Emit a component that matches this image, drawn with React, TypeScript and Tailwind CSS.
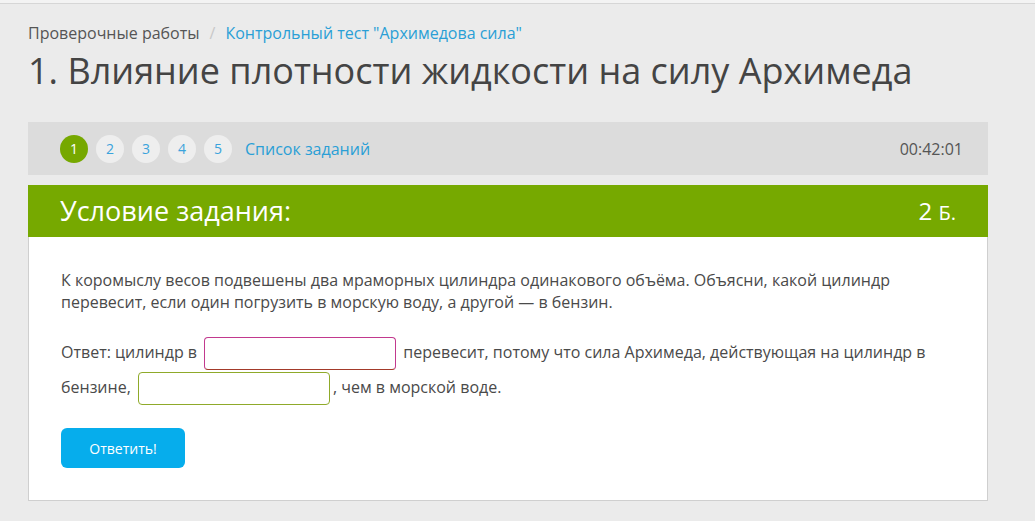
import React from "react";

export default function App() {
  const font = { fontFamily: '"Open Sans", "Noto Sans", sans-serif' };
  return (
    <div className="min-h-[521px] w-full bg-[#ebebeb] text-[#444]" style={font}>
      <div className="h-[4px] bg-[#f3f3f3] border-b border-[#d6d6d6]" />
      <div className="px-[28px] w-[1016px]">
        <div className="pt-[18px] flex items-center text-[16px] leading-[22px]">
          <span className="text-[#555]">Проверочные работы</span>
          <span className="mx-[10px] text-[#c8c8c8]">/</span>
          <span className="text-[#2a9fd6]">Контрольный тест "Архимедова сила"</span>
        </div>
        <h1 className="mt-[5px] text-[36px] leading-[44px] text-[#444] font-normal">
          1. Влияние плотности жидкости на силу Архимеда
        </h1>
        <div className="mt-[29px] h-[53px] bg-[#dcdcdc] flex items-center pl-[32px] pr-[25px]">
          <div className="flex items-center gap-[8px]">
            <div className="w-[28px] h-[28px] rounded-full bg-[#76a800] text-white text-[14px] flex items-center justify-center">1</div>
            {["2", "3", "4", "5"].map((n) => (
              <div key={n} className="w-[28px] h-[28px] rounded-full bg-[#eeeeee] text-[#3aa3dc] text-[14px] flex items-center justify-center">{n}</div>
            ))}
            <span className="ml-[5px] text-[#2a9fd6] text-[16px]">Список заданий</span>
          </div>
          <div className="ml-auto text-[16px] text-[#555]">00:42:01</div>
        </div>
        <div className="mt-[10px] border border-[#cfcfcf] bg-white">
          <div className="h-[52px] bg-[#76a900] flex items-center pl-[32px] pr-[32px] text-white -m-[1px] mb-0">
            <span className="text-[27px]">Условие задания:</span>
            <span className="ml-auto text-[24px]">2 <span className="text-[20px]">Б.</span></span>
          </div>
          <div className="px-[32px] pt-[32px] pb-[32px] text-[16px] text-[#4a4a4a]">
            <p className="leading-[22px]">
              К коромыслу весов подвешены два мраморных цилиндра одинакового объёма. Объясни, какой цилиндр перевесит, если один погрузить в морскую воду, а другой — в бензин.
            </p>
            <p className="mt-[22px] leading-[34px]">
              Ответ: цилиндр в{" "}
              <span className="inline-block align-middle mx-[3px] w-[192px] h-[33px] rounded-[4px] border border-[#c2398e] border-b-[#a33a2a] bg-white" />{" "}
              перевесит, потому что сила Архимеда, действующая на цилиндр в бензине,{" "}
              <span className="inline-block align-middle ml-[3px] mr-[3px] w-[192px] h-[33px] rounded-[4px] border border-[#8faa2a] bg-white" />, чем в морской воде.
            </p>
            <button className="mt-[23px] w-[124px] h-[40px] rounded-[6px] bg-[#06adec] text-white text-[14px]">
              Ответить!
            </button>
          </div>
        </div>
      </div>
    </div>
  );
}
